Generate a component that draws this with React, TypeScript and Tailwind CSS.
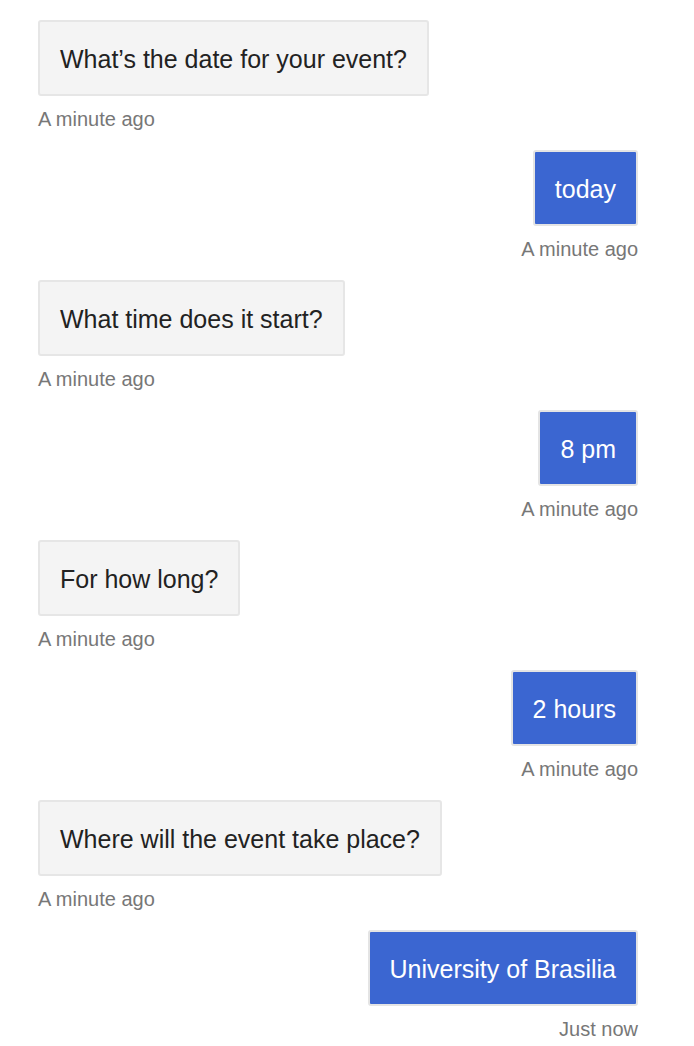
import React from 'react';

type Msg = { from: 'bot' | 'user'; text: string; time: string };

const messages: Msg[] = [
  { from: 'bot', text: 'What’s the date for your event?', time: 'A minute ago' },
  { from: 'user', text: 'today', time: 'A minute ago' },
  { from: 'bot', text: 'What time does it start?', time: 'A minute ago' },
  { from: 'user', text: '8 pm', time: 'A minute ago' },
  { from: 'bot', text: 'For how long?', time: 'A minute ago' },
  { from: 'user', text: '2 hours', time: 'A minute ago' },
  { from: 'bot', text: 'Where will the event take place?', time: 'A minute ago' },
  { from: 'user', text: 'University of Brasilia', time: 'Just now' },
];

export default function App() {
  return (
    <div
      className="min-h-screen bg-white pt-[20px] pl-[38px] pr-[56px]"
      style={{ fontFamily: '"Liberation Sans", Arial, sans-serif' }}
    >
      {messages.map((m, i) => {
        const isUser = m.from === 'user';
        return (
          <div key={i} className={`flex flex-col h-[130px] ${isUser ? 'items-end' : 'items-start'}`}>
            <div
              className={
                isUser
                  ? 'rounded-[3px] border-2 border-[#e4e4e4] bg-[#3b66d1] px-[20px] pt-[21px] pb-[19px] text-[25px] leading-[32px] text-white'
                  : 'rounded-[3px] border-2 border-[#e6e6e6] bg-[#f4f4f4] px-[20px] pt-[21px] pb-[19px] text-[25px] leading-[32px] text-[#222222]'
              }
            >
              {m.text}
            </div>
            <div className="mt-[11px] text-[20px] leading-[24px] text-[#777777]">{m.time}</div>
          </div>
        );
      })}
    </div>
  );
}
